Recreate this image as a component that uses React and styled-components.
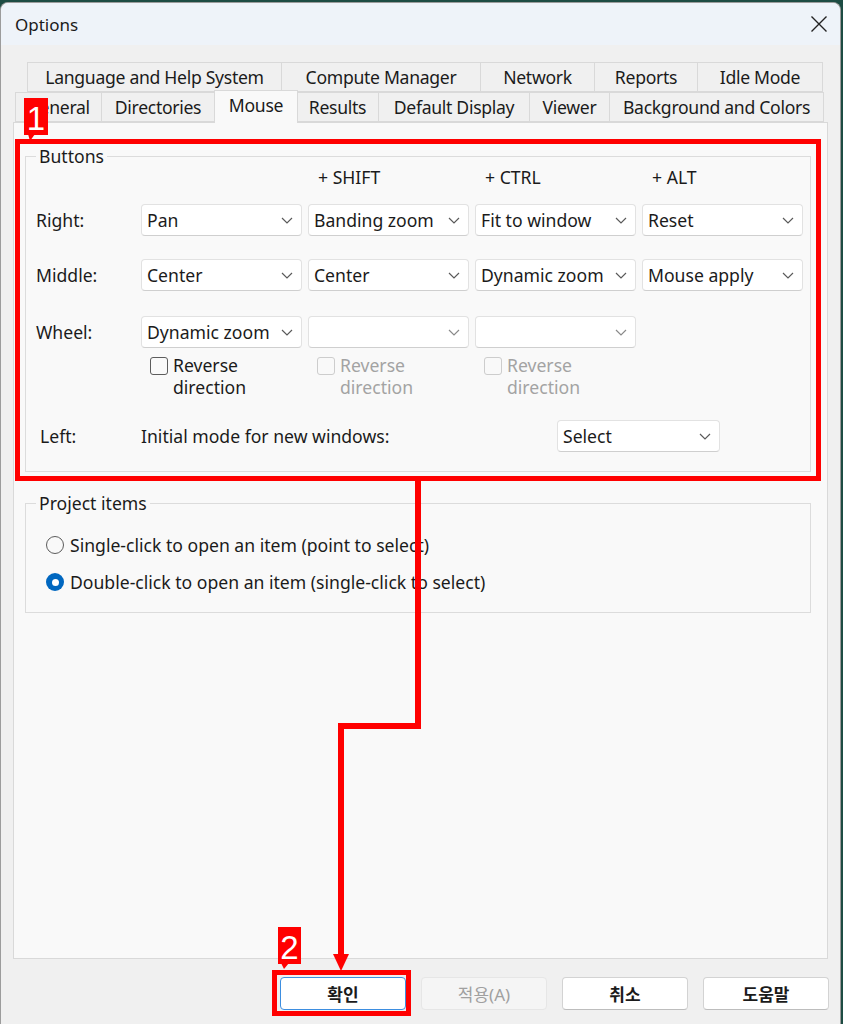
import React from 'react'
import styled, { createGlobalStyle } from 'styled-components'

const FS = '17.6px'

const GlobalStyle = createGlobalStyle`
    *{
        margin: 0;
        padding: 0;
        box-sizing: border-box;
    }
    body{
        background: #1d4c43;
        font-family: 'Noto Sans', 'Noto Sans CJK KR', sans-serif;
        color: #1b1b1b;
        width: 843px;
        height: 1024px;
        overflow: hidden;
    }
`

const Page = styled.div`
    position: relative;
    width: 843px;
    height: 1024px;
    padding-top: 2px;
`

const Window = styled.div`
    width: 841px;
    height: 1022px;
    border: 1px solid #9c9c9c;
    border-bottom: none;
    border-radius: 8px 8px 0 0;
    overflow: hidden;
    background: #f0f0f0;
    display: flex;
    flex-direction: column;
`

const TitleBar = styled.div`
    height: 42px;
    flex-shrink: 0;
    background: #eef3f9;
    display: flex;
    align-items: center;
    justify-content: space-between;
    padding: 0 12px 0 14px;
    font-size: 17px;
`

const Content = styled.div`
    flex: 1;
    display: flex;
    flex-direction: column;
    padding: 17px 12px 0 12px;
`

const TabRow = styled.div`
    display: flex;
    margin-left: ${p => p.$offset}px;
    height: 30px;
`

const Tab = styled.div`
    width: ${p => p.$w}px;
    display: flex;
    align-items: center;
    justify-content: center;
    font-size: ${FS};
    letter-spacing: -0.3px;
    white-space: nowrap;
    overflow: hidden;
    padding-bottom: 1px;
    background: ${p => p.$active ? '#f9f9f9' : '#f0f0f0'};
    border: 1px solid #d9d9d9;
    border-left-width: ${p => p.$first ? 1 : 0}px;
    border-bottom: ${p => p.$active ? 'none' : '1px solid #d9d9d9'};
    ${p => p.$active && `
        border-left-width: 1px;
        margin: -2px -1px 0 -1px;
        height: 33px;
        position: relative;
        z-index: 1;
        padding-bottom: 4px;
    `}
`

const Panel = styled.div`
    height: 837px;
    background: #f9f9f9;
    border: 1px solid #d9d9d9;
    padding: 33px 16px 0 11px;
    display: flex;
    flex-direction: column;
`

const Group = styled.div`
    position: relative;
    border: 1px solid #dcdcdc;
    margin-top: ${p => p.$mt || 0}px;
    padding: ${p => p.$pad};
`

const Caption = styled.span`
    position: absolute;
    top: -13px;
    left: 10px;
    padding: 0 3px;
    background: #f9f9f9;
    font-size: ${FS};
    line-height: 24px;
`

const Grid = styled.div`
    display: grid;
    grid-template-columns: 99px repeat(4, 161px);
    column-gap: 6px;
    align-items: center;
    margin-top: ${p => p.$mt || 0}px;
    height: ${p => p.$h}px;
`

const RowLabel = styled.span`
    font-size: ${FS};
    padding-left: ${p => p.$indent || 0}px;
`

const Modifier = styled.span`
    font-size: ${FS};
    padding-left: 10px;
`

const Drop = styled.div`
    height: 32px;
    width: ${p => p.$w ? p.$w + 'px' : 'auto'};
    background: #ffffff;
    border: 1px solid #e2e2e2;
    border-bottom-color: #cfcfcf;
    border-radius: 4px;
    display: flex;
    align-items: center;
    justify-content: space-between;
    padding: 0 8px 0 5px;
    font-size: ${FS};
    white-space: nowrap;
`

const Check = styled.label`
    display: flex;
    align-items: flex-start;
    gap: 5px;
    padding-left: 9px;
    font-size: ${FS};
    line-height: 22px;
    color: ${p => p.$disabled ? '#a3a3a3' : '#1b1b1b'};
`

const Box = styled.span`
    width: 18px;
    height: 18px;
    margin-top: 3px;
    flex-shrink: 0;
    border-radius: 3px;
    border: 1.5px solid ${p => p.$disabled ? '#cdcdcd' : '#5c5c5c'};
    background: #f9f9f9;
`

const LeftRow = styled.div`
    display: flex;
    align-items: center;
    margin-top: 22px;
    font-size: ${FS};
`

const ModeText = styled.span`
    width: 416px;
`

const RadioRow = styled.label`
    display: flex;
    align-items: center;
    gap: 6px;
    height: 26px;
    font-size: ${FS};
    margin-top: ${p => p.$mt || 0}px;
`

const Radio = styled.span`
    width: 18px;
    height: 18px;
    border-radius: 50%;
    flex-shrink: 0;
    display: flex;
    align-items: center;
    justify-content: center;
    border: ${p => p.$on ? 'none' : '1.5px solid #5c5c5c'};
    background: ${p => p.$on ? '#0067c0' : '#f9f9f9'};
    &::after{
        content: '';
        display: ${p => p.$on ? 'block' : 'none'};
        width: 7px;
        height: 7px;
        border-radius: 50%;
        background: #ffffff;
    }
`

const Footer = styled.div`
    flex: 1;
    display: flex;
    justify-content: flex-end;
    gap: 15px;
    padding-top: 18px;
    margin-right: -1px;
`

const Button = styled.div`
    width: 126px;
    height: 33px;
    display: flex;
    align-items: center;
    justify-content: center;
    font-size: 17px;
    border-radius: 4px;
    background: ${p => p.$disabled ? '#f5f5f5' : '#ffffff'};
    color: ${p => p.$disabled ? '#a0a0a0' : '#1b1b1b'};
    font-weight: ${p => p.$disabled ? 400 : 600};
    border: 1px solid ${p => p.$focus ? '#3d8ee0' : p.$disabled ? '#e6e6e6' : '#d3d3d3'};
    border-bottom-color: ${p => p.$focus ? '#3d8ee0' : p.$disabled ? '#e6e6e6' : '#bdbdbd'};
`

const Overlay = styled.svg`
    position: absolute;
    left: 0;
    top: 0;
    pointer-events: none;
`

function Chevron({ muted }) {
    return (
        <svg width="12" height="7" viewBox="0 0 12 7">
            <polyline points="1,1 6,6 11,1" fill="none" stroke={muted ? '#8a8a8a' : '#5a5a5a'} strokeWidth="1.2" />
        </svg>
    )
}

function Select({ value, w }) {
    return (
        <Drop $w={w}>
            <span>{value}</span>
            <Chevron muted={!value} />
        </Drop>
    )
}

const topTabs = [
    ['Language and Help System', 255],
    ['Compute Manager', 199],
    ['Network', 114],
    ['Reports', 103],
    ['Idle Mode', 125],
]

const bottomTabs = [
    ['General', 87],
    ['Directories', 113],
    ['Mouse', 84, true],
    ['Results', 82],
    ['Default Display', 151],
    ['Viewer', 80],
    ['Background and Colors', 214],
]

const mouseRows = [
    ['Right:', ['Pan', 'Banding zoom', 'Fit to window', 'Reset'], 15],
    ['Middle:', ['Center', 'Center', 'Dynamic zoom', 'Mouse apply'], 23],
]

export default function App() {
    return (
        <Page>
            <GlobalStyle />
            <Window>
                <TitleBar>
                    <span>Options</span>
                    <svg width="18" height="18" viewBox="0 0 18 18">
                        <path d="M1.5 1.5 L16.5 16.5 M16.5 1.5 L1.5 16.5" stroke="#222" strokeWidth="1.4" />
                    </svg>
                </TitleBar>
                <Content>
                    <TabRow $offset={14}>
                        {topTabs.map(([t, w], i) => (
                            <Tab key={t} $w={w} $first={i === 0}>{t}</Tab>
                        ))}
                    </TabRow>
                    <TabRow $offset={2}>
                        {bottomTabs.map(([t, w, active], i) => (
                            <Tab key={t} $w={w} $first={i === 0} $active={active}>{t}</Tab>
                        ))}
                    </TabRow>
                    <Panel>
                        <Group $pad="8px 0 19px 10px">
                            <Caption>Buttons</Caption>
                            <Grid $h={24}>
                                <span />
                                <span />
                                <Modifier>+ SHIFT</Modifier>
                                <Modifier>+ CTRL</Modifier>
                                <Modifier>+ ALT</Modifier>
                            </Grid>
                            {mouseRows.map(([label, values, mt]) => (
                                <Grid key={label} $mt={mt} $h={32}>
                                    <RowLabel>{label}</RowLabel>
                                    {values.map((v, i) => <Select key={i} value={v} />)}
                                </Grid>
                            ))}
                            <Grid $mt={25} $h={32}>
                                <RowLabel>Wheel:</RowLabel>
                                <Select value="Dynamic zoom" />
                                <Select value="" />
                                <Select value="" />
                            </Grid>
                            <Grid $mt={6} $h={44}>
                                <span />
                                <Check><Box />Reverse<br />direction</Check>
                                <Check $disabled><Box $disabled />Reverse<br />direction</Check>
                                <Check $disabled><Box $disabled />Reverse<br />direction</Check>
                            </Grid>
                            <LeftRow>
                                <RowLabel $indent={4} style={{ width: 105 }}>Left:</RowLabel>
                                <ModeText>Initial mode for new windows:</ModeText>
                                <Select value="Select" w={163} />
                            </LeftRow>
                        </Group>
                        <Group $mt={31} $pad="28px 0 17px 20px">
                            <Caption>Project items</Caption>
                            <RadioRow><Radio />Single-click to open an item (point to select)</RadioRow>
                            <RadioRow $mt={11}><Radio $on />Double-click to open an item (single-click to select)</RadioRow>
                        </Group>
                    </Panel>
                    <Footer>
                        <Button $focus>확인</Button>
                        <Button $disabled>적용(A)</Button>
                        <Button>취소</Button>
                        <Button>도움말</Button>
                    </Footer>
                </Content>
            </Window>

            <Overlay width="843" height="1024" viewBox="0 0 843 1024">
                <rect x="17.5" y="141.5" width="801" height="337" fill="none" stroke="#ff0000" strokeWidth="5" />
                <polyline points="418,481 418,726 341,726 341,956" fill="none" stroke="#ff0000" strokeWidth="6" />
                <polygon points="333,954 349,954 341,971" fill="#ff0000" />
                <rect x="274.5" y="972.5" width="134" height="41" fill="none" stroke="#ff0000" strokeWidth="5" />

                <rect x="24" y="98" width="24" height="37" fill="#ff0000" />
                <polygon points="28,134 35,134 30,141" fill="#ff0000" />
                <text x="36" y="130" fill="#ffffff" fontSize="33" textAnchor="middle" fontFamily="Liberation Sans, sans-serif">1</text>

                <rect x="278" y="927" width="23" height="37" fill="#ff0000" />
                <polygon points="281,963 289,963 284,969" fill="#ff0000" />
                <text x="289.5" y="959" fill="#ffffff" fontSize="33" textAnchor="middle" fontFamily="Liberation Sans, sans-serif">2</text>
            </Overlay>
        </Page>
    )
}
